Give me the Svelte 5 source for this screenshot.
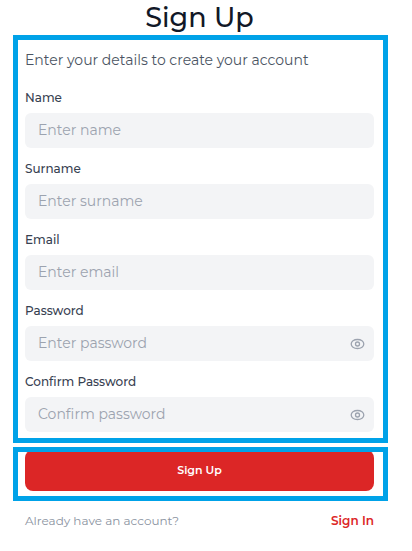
<script>
  const fields = [
    { id: 'name', label: 'Name', hint: 'Enter name', type: 'text' },
    { id: 'surname', label: 'Surname', hint: 'Enter surname', type: 'text' },
    { id: 'email', label: 'Email', hint: 'Enter email', type: 'email' },
    { id: 'password', label: 'Password', hint: 'Enter password', type: 'password' },
    { id: 'confirm', label: 'Confirm Password', hint: 'Confirm password', type: 'password' }
  ];
  let shown = $state({});
</script>

<main>
  <h1>Sign Up</h1>
  <form onsubmit={(e) => e.preventDefault()}>
    <section class="frame details">
      <p>Enter your details to create your account</p>
      {#each fields as f (f.id)}
        <div class="field">
          <label for={f.id}>{f.label}</label>
          <div class="box">
            <input id={f.id} type={shown[f.id] ? 'text' : f.type} placeholder={f.hint} />
            {#if f.type === 'password'}
              <button
                type="button"
                class="eye"
                aria-label="Show password"
                onclick={() => (shown[f.id] = !shown[f.id])}
              >
                <svg width="15" height="12" viewBox="0 0 15 12" fill="none" stroke="#9ca3af" stroke-width="1.3">
                  <path d="M1.2 6C1.2 3.6 3.8 1.5 7.5 1.5S13.8 3.6 13.8 6 11.2 10.5 7.5 10.5 1.2 8.4 1.2 6Z" />
                  <circle cx="7.5" cy="6" r="2" />
                </svg>
              </button>
            {/if}
          </div>
        </div>
      {/each}
    </section>
    <section class="frame action">
      <button type="submit" class="submit">Sign Up</button>
    </section>
  </form>
  <footer>
    <span>Already have an account?</span>
    <a href="#sign-in">Sign In</a>
  </footer>
</main>

<style>
  :global(body) {
    background: #fff;
  }
  main {
    padding: 0 24px 20px 13px;
    font-family: Montserrat, Inter, sans-serif;
    font-size: 14px;
    line-height: 20px;
    color: #4b5563;
  }
  h1 {
    margin: 0;
    padding-right: 2px;
    font-size: 27px;
    font-weight: 500;
    line-height: 35px;
    text-align: center;
    color: #111827;
  }
  .frame {
    position: relative;
  }
  .frame::after {
    content: '';
    position: absolute;
    inset: 0;
    border: 5px solid #00a2e8;
    pointer-events: none;
  }
  .details {
    display: flex;
    flex-direction: column;
    gap: 11px;
    padding: 15px 14px 11px 12px;
  }
  p {
    margin: 0 0 7px;
  }
  .field {
    display: flex;
    flex-direction: column;
    gap: 5px;
  }
  label {
    font-size: 12px;
    font-weight: 500;
    color: #374151;
  }
  .box {
    display: flex;
    align-items: center;
    height: 35px;
    padding: 0 9px 0 13px;
    border-radius: 6px;
    background: #f3f4f6;
  }
  input {
    flex: 1;
    min-width: 0;
    padding: 0 0 2px;
    border: 0;
    outline: 0;
    background: transparent;
    font: inherit;
    color: #111827;
  }
  input::placeholder {
    color: #9ca3af;
    opacity: 1;
  }
  .eye {
    display: flex;
    padding: 0;
    border: 0;
    background: none;
    cursor: pointer;
  }
  .action {
    margin-top: 4px;
    padding: 3px 14px 10px 12px;
  }
  .submit {
    display: block;
    width: 100%;
    height: 41px;
    padding: 0 0 2px;
    border: 0;
    border-radius: 8px;
    background: #dc2626;
    color: #fff;
    font: 600 11px/20px Montserrat, Inter, sans-serif;
    cursor: pointer;
  }
  footer {
    display: flex;
    justify-content: space-between;
    padding: 10px 14px 0 12px;
    font-size: 12px;
    color: #8b93a1;
  }
  a {
    font-weight: 600;
    color: #dc2626;
    text-decoration: none;
  }
</style>
